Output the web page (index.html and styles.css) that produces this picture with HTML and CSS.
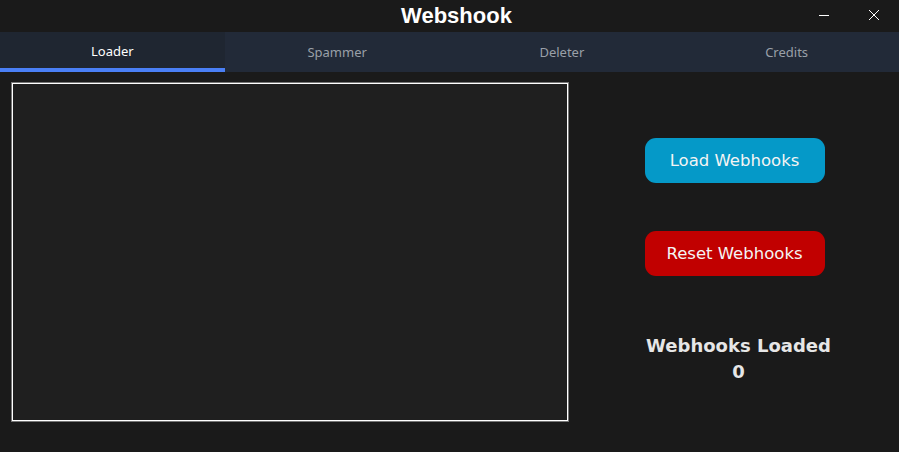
FILE: index.html
```html
<!DOCTYPE html>
<html lang="en">
<head>
    <meta charset="UTF-8">
    <meta name="viewport" content="width=device-width, initial-scale=1.0">
    <title>Webshook</title>
    <link rel="stylesheet" href="styles.css">
</head>
<body>
    <div class="titlebar">
        <div class="title">Webshook</div>
        <div class="window-buttons">
            <button class="win-btn" title="Minimize">
                <svg width="12" height="12" viewBox="0 0 12 12"><path d="M1 6.5h10" stroke="#fff" stroke-width="1"/></svg>
            </button>
            <button class="win-btn" title="Close">
                <svg width="12" height="12" viewBox="0 0 12 12"><path d="M1 1l10 10M11 1L1 11" stroke="#fff" stroke-width="1"/></svg>
            </button>
        </div>
    </div>
    <div class="tabs">
        <div class="tab active">Loader</div>
        <div class="tab">Spammer</div>
        <div class="tab">Deleter</div>
        <div class="tab">Credits</div>
    </div>
    <div class="main">
        <textarea class="hooks-box" spellcheck="false"></textarea>
        <div class="side">
            <button class="action load">Load Webhooks</button>
            <button class="action reset">Reset Webhooks</button>
            <div class="count">
                <div>Webhooks Loaded</div>
                <div id="count-value">0</div>
            </div>
        </div>
    </div>
</body>
</html>
```

FILE: styles.css
```css
html, body {
    margin: 0;
    height: 100%;
}
body {
    background-color: #1a1a1a;
    color: #fff;
    font-family: "Noto Sans", sans-serif;
    overflow: hidden;
}
.titlebar {
    height: 32px;
    display: flex;
    justify-content: center;
    align-items: center;
    position: relative;
}
.title {
    font-family: "Liberation Sans", Arial, sans-serif;
    font-weight: bold;
    font-size: 22px;
    padding-left: 14px;
}
.window-buttons {
    position: absolute;
    right: 0;
    top: 0;
    display: flex;
}
.win-btn {
    width: 50px;
    height: 30px;
    background: none;
    border: none;
    display: flex;
    justify-content: center;
    align-items: center;
    padding: 0;
}
.tabs {
    display: grid;
    grid-template-columns: repeat(4, 1fr);
    height: 40px;
    background-color: #222a38;
}
.tab {
    display: flex;
    justify-content: center;
    align-items: center;
    font-size: 13px;
    color: #9aa0a8;
    box-sizing: border-box;
}
.tab.active {
    background-color: #1f2631;
    color: #fff;
    border-bottom: 4px solid #4a7ff5;
    padding-top: 2px;
}
.main {
    display: flex;
    padding: 10px 0 0 11px;
}
.hooks-box {
    width: 554px;
    height: 336px;
    background-color: #1f1f1f;
    border: 1px solid #fff;
    box-shadow: 0 0 0 1px #777;
    margin: 1px 0 0 1px;
    resize: none;
    color: #fff;
    padding: 0;
    outline: none;
}
.side {
    flex: 1;
    display: flex;
    flex-direction: column;
    align-items: center;
    padding: 56px 61px 0 63px;
}
.action {
    width: 180px;
    height: 45px;
    border: none;
    border-radius: 11px;
    color: #f4f4f4;
    font-family: "DejaVu Sans", Verdana, sans-serif;
    font-size: 16.5px;
    padding: 0;
}
.load {
    background-color: #0599c8;
}
.reset {
    background-color: #c10000;
    margin-top: 48px;
}
.count {
    margin-top: 57px;
    padding-left: 8px;
    text-align: center;
    font-family: "DejaVu Sans", Verdana, sans-serif;
    font-weight: bold;
    font-size: 18px;
    line-height: 26px;
    color: #e6e6e6;
}
```
